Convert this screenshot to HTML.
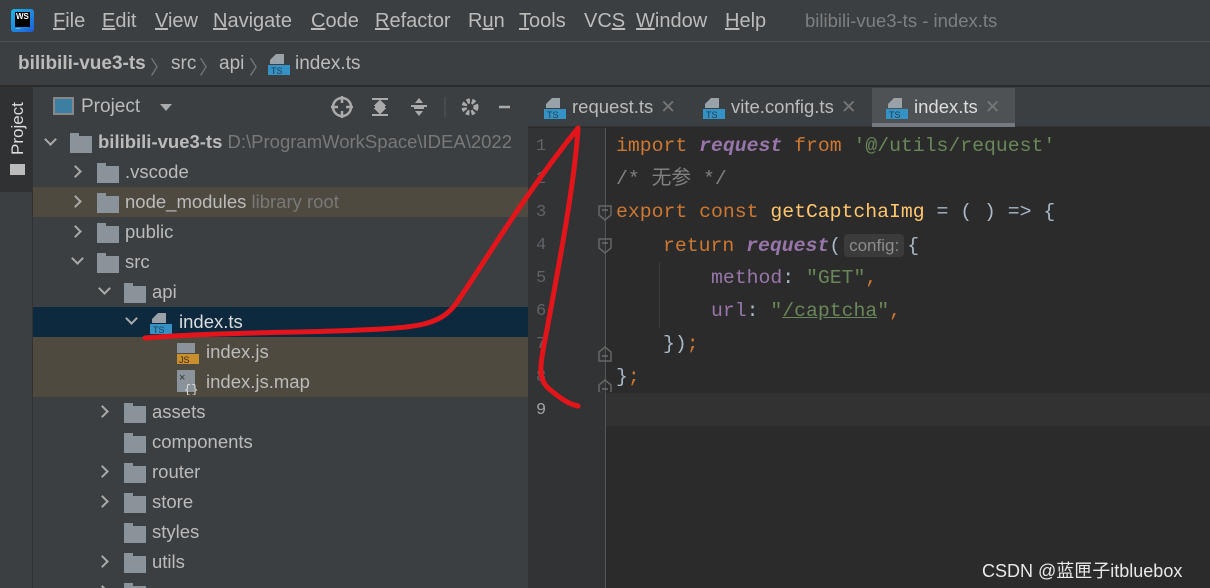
<!DOCTYPE html>
<html><head><meta charset="utf-8"><style>
*{margin:0;padding:0;box-sizing:border-box}
html,body{width:1210px;height:588px;overflow:hidden}
body{background:#3c3f41;font-family:"Liberation Sans","Noto Sans CJK SC",sans-serif;color:#bbbbbb;position:relative}
.a{position:absolute;white-space:nowrap}
.mono{font-family:"Liberation Mono","Noto Sans CJK SC",monospace;font-size:19.8px}
.row{position:absolute;left:33px;width:495px;height:30px;font-size:18.5px;line-height:30px;overflow:hidden}
.fold{position:absolute;width:22px;height:17px;background:#8a9399}
.fold:before{content:"";position:absolute;left:0;top:-3px;width:9px;height:4px;background:#8a9399}
.chev{position:absolute;width:9px;height:9px;border-right:2px solid #aaa;border-bottom:2px solid #aaa}
.ln{position:absolute;left:536px;width:14px;text-align:left;color:#606366;font-size:17px;font-family:"Liberation Mono",monospace}
.code{position:absolute;left:616px;height:33px;line-height:33px}
.k{color:#cc7832}.f{color:#9876aa;font-style:italic;font-weight:bold}.s{color:#6a8759}.c{color:#808080}.y{color:#ffc66d}.p{color:#9876aa}.w{color:#a9b7c6}
u.m{text-decoration:underline}
</style></head><body>
<div class="a" style="left:0;top:0;width:1210px;height:42px;background:#3c3f41;border-bottom:1px solid #515151"></div>
<div class="a" style="left:11px;top:9px;width:23px;height:23px;background:linear-gradient(135deg,#1fb6e6,#1e5fd8);border-radius:3px"></div>
<div class="a" style="left:15px;top:12px;width:15px;height:15px;background:#000;color:#fff;font-size:8px;font-weight:bold;line-height:9px;padding-left:1px">WS<br>_</div>
<div class="a" style="left:53px;top:10px;font-size:20px;color:#bbb">
<span class="a" style="left:0"><u>F</u>ile</span><span class="a" style="left:49px"><u>E</u>dit</span><span class="a" style="left:102px"><u>V</u>iew</span><span class="a" style="left:160px"><u>N</u>avigate</span><span class="a" style="left:258px"><u>C</u>ode</span><span class="a" style="left:322px"><u>R</u>efactor</span><span class="a" style="left:415px">R<u>u</u>n</span><span class="a" style="left:466px"><u>T</u>ools</span><span class="a" style="left:531px">VC<u>S</u></span><span class="a" style="left:583px"><u>W</u>indow</span><span class="a" style="left:672px"><u>H</u>elp</span></div>
<div class="a" style="left:805px;top:10px;font-size:18.5px;color:#7d7f81">bilibili-vue3-ts - index.ts</div>
<div class="a" style="left:0;top:85px;width:1210px;height:2px;background:#2b2b2b"></div>
<div class="a" style="left:18px;top:53px;font-size:19px;color:#bbb;font-weight:bold">bilibili-vue3-ts</div>
<div class="a" style="left:150px;top:53px;font-size:19px;color:#777">〉</div>
<div class="a" style="left:171px;top:53px;font-size:19px;color:#bbb">src</div>
<div class="a" style="left:199px;top:53px;font-size:19px;color:#777">〉</div>
<div class="a" style="left:219px;top:53px;font-size:19px;color:#bbb">api</div>
<div class="a" style="left:249px;top:53px;font-size:19px;color:#777">〉</div>
<div class="a" style="left:295px;top:53px;font-size:19px;color:#bbb">index.ts</div>
<svg class="a" style="left:267px;top:52px" width="24" height="24"><path d="M9 2h8v10H3V8z" fill="#9aa2a8"/><rect x="1" y="13" width="22" height="10" fill="#3592c4"/><text x="4" y="22" font-size="9" fill="#1b3d55" font-family="Liberation Sans">TS</text></svg>
<div class="a" style="left:0;top:87px;width:33px;height:501px;background:#3c3f41;border-right:1px solid #323232"></div>
<div class="a" style="left:0;top:87px;width:32px;height:105px;background:#2f3133"></div>
<div class="a" style="left:8px;top:100px;font-size:17px;color:#ddd;writing-mode:vertical-rl;transform:rotate(180deg);height:55px">Project</div>
<div class="a" style="left:10px;top:164px;width:15px;height:11px;background:#bbb"></div>
<div class="a" style="left:53px;top:97px;width:21px;height:18px;border:2px solid #888;background:#3d7fa3"></div>
<div class="a" style="left:81px;top:96px;font-size:19px;color:#bbb">Project</div>
<div class="a" style="left:160px;top:104px;border:6px solid transparent;border-top:7px solid #aaa"></div>
<svg class="a" style="left:330px;top:95px" width="180" height="24"><circle cx="12" cy="12" r="9" stroke="#aaa" stroke-width="2.5" fill="none"/><path d="M12 1v7M12 16v7M1 12h7M16 12h7" stroke="#aaa" stroke-width="2.5"/>
<path d="M42 4h16M42 20h16M45 12h10M50 6l-4 4h8zM50 18l-4-4h8z" stroke="#aaa" stroke-width="2" fill="#aaa"/>
<path d="M81 11h16M84 13h10" stroke="#aaa" stroke-width="2"/><path d="M89 3l-4 5h8zM89 21l-4-5h8z" fill="#aaa"/>
<line x1="115" y1="2" x2="115" y2="22" stroke="#555"/>
<circle cx="140" cy="12" r="6" stroke="#aaa" stroke-width="5" fill="none" stroke-dasharray="3 2"/><circle cx="140" cy="12" r="2.5" fill="#3c3f41"/>
<path d="M169 12h16" stroke="#aaa" stroke-width="2.5"/></svg>
<div class="row" style="top:127px"><div class="chev" style="left:13px;top:8px;transform:rotate(45deg)"></div><div class="fold" style="left:37px;top:9px"></div><span class="a" style="left:65px"><b>bilibili-vue3-ts</b> <span style="color:#787878">D:\ProgramWorkSpace\IDEA\2022</span></span></div>
<div class="row" style="top:157px"><div class="chev" style="left:38px;top:10px;transform:rotate(-45deg)"></div><div class="fold" style="left:64px;top:9px"></div><span class="a" style="left:92px">.vscode</span></div>
<div class="row" style="top:187px;background:#4e4a40"><div class="chev" style="left:38px;top:10px;transform:rotate(-45deg)"></div><div class="fold" style="left:64px;top:9px"></div><span class="a" style="left:92px">node_modules <span style="color:#787878">library root</span></span></div>
<div class="row" style="top:217px"><div class="chev" style="left:38px;top:10px;transform:rotate(-45deg)"></div><div class="fold" style="left:64px;top:9px"></div><span class="a" style="left:92px">public</span></div>
<div class="row" style="top:247px"><div class="chev" style="left:40px;top:7px;transform:rotate(45deg)"></div><div class="fold" style="left:64px;top:9px"></div><span class="a" style="left:92px">src</span></div>
<div class="row" style="top:277px"><div class="chev" style="left:67px;top:7px;transform:rotate(45deg)"></div><div class="fold" style="left:91px;top:9px"></div><span class="a" style="left:119px">api</span></div>
<div class="row" style="top:307px;background:#0d293e"><div class="chev" style="left:94px;top:7px;transform:rotate(45deg)"></div><svg class="a" style="left:116px;top:4px" width="24" height="24"><path d="M9 2h8v10H3V8z" fill="#9aa2a8"/><rect x="1" y="13" width="22" height="10" fill="#3592c4"/><text x="4" y="22" font-size="9" fill="#1b3d55" font-family="Liberation Sans">TS</text></svg><span class="a" style="left:146px;color:#ddd">index.ts</span></div>
<div class="row" style="top:337px;background:#4e4a40"><svg class="a" style="left:142px;top:5px" width="24" height="24"><rect x="2" y="1" width="18" height="10" fill="#8a9399"/><rect x="2" y="12" width="22" height="10" fill="#c98f2f"/><text x="4" y="21" font-size="9" fill="#3b2a0a" font-family="Liberation Sans">JS</text></svg><span class="a" style="left:173px">index.js</span></div>
<div class="row" style="top:367px;background:#4e4a40"><svg class="a" style="left:142px;top:2px" width="24" height="26"><rect x="2" y="1" width="18" height="22" fill="#8a9399"/><text x="4" y="12" font-size="11" fill="#333">×</text><text x="9" y="24" font-size="12" fill="#ddd" font-family="Liberation Mono">{}</text></svg><span class="a" style="left:173px">index.js.map</span></div>
<div class="row" style="top:397px"><div class="chev" style="left:65px;top:10px;transform:rotate(-45deg)"></div><div class="fold" style="left:91px;top:9px"></div><span class="a" style="left:119px">assets</span></div>
<div class="row" style="top:427px"><div class="fold" style="left:91px;top:9px"></div><span class="a" style="left:119px">components</span></div>
<div class="row" style="top:457px"><div class="chev" style="left:65px;top:10px;transform:rotate(-45deg)"></div><div class="fold" style="left:91px;top:9px"></div><span class="a" style="left:119px">router</span></div>
<div class="row" style="top:487px"><div class="chev" style="left:65px;top:10px;transform:rotate(-45deg)"></div><div class="fold" style="left:91px;top:9px"></div><span class="a" style="left:119px">store</span></div>
<div class="row" style="top:517px"><div class="fold" style="left:91px;top:9px"></div><span class="a" style="left:119px">styles</span></div>
<div class="row" style="top:547px"><div class="chev" style="left:65px;top:10px;transform:rotate(-45deg)"></div><div class="fold" style="left:91px;top:9px"></div><span class="a" style="left:119px">utils</span></div>
<div class="row" style="top:577px;height:11px"><div class="chev" style="left:65px;top:10px;transform:rotate(-45deg)"></div><div class="fold" style="left:91px;top:9px"></div></div>
<div class="a" style="left:528px;top:87px;width:682px;height:501px;background:#2b2b2b;border-left:1px solid #323232"></div>
<div class="a" style="left:528px;top:87px;width:682px;height:40px;background:#3c3f41;border-bottom:1px solid #323232"></div>
<div class="a" style="left:872px;top:88px;width:143px;height:39px;background:#4e5254;border-bottom:4px solid #747a80"></div>
<svg class="a" style="left:543px;top:96px" width="24" height="24"><path d="M9 2h8v10H3V8z" fill="#9aa2a8"/><rect x="1" y="13" width="22" height="10" fill="#3592c4"/><text x="4" y="22" font-size="9" fill="#1b3d55" font-family="Liberation Sans">TS</text></svg>
<svg class="a" style="left:702px;top:96px" width="24" height="24"><path d="M9 2h8v10H3V8z" fill="#9aa2a8"/><rect x="1" y="13" width="22" height="10" fill="#3592c4"/><text x="4" y="22" font-size="9" fill="#1b3d55" font-family="Liberation Sans">TS</text></svg>
<svg class="a" style="left:885px;top:96px" width="24" height="24"><path d="M9 2h8v10H3V8z" fill="#9aa2a8"/><rect x="1" y="13" width="22" height="10" fill="#3592c4"/><text x="4" y="22" font-size="9" fill="#1b3d55" font-family="Liberation Sans">TS</text></svg>
<div class="a" style="left:572px;top:96px;font-size:18.5px;color:#bbb">request.ts <span style="color:#777;margin-left:2px">✕</span></div>
<div class="a" style="left:731px;top:96px;font-size:18.5px;color:#bbb">vite.config.ts <span style="color:#777;margin-left:2px">✕</span></div>
<div class="a" style="left:914px;top:96px;font-size:18.5px;color:#ddd">index.ts <span style="color:#777;margin-left:2px">✕</span></div>
<div class="a" style="left:529px;top:128px;width:76px;height:460px;background:#313335"></div>
<div class="a" style="left:605px;top:128px;width:1px;height:460px;background:#555"></div>
<div class="a" style="left:606px;top:393px;width:604px;height:33px;background:#323232"></div>
<div class="a" style="left:659px;top:262px;width:1px;height:66px;background:#3b3b3b"></div>
<div class="ln" style="top:137px">1</div><div class="ln" style="top:170px">2</div><div class="ln" style="top:203px">3</div><div class="ln" style="top:236px">4</div><div class="ln" style="top:269px">5</div><div class="ln" style="top:302px">6</div><div class="ln" style="top:335px">7</div><div class="ln" style="top:368px">8</div><div class="ln" style="top:401px;color:#a4a3a3">9</div>
<svg class="a" style="left:597px;top:202px" width="16" height="190"><g fill="none" stroke="#666" stroke-width="1.5"><path d="M2 4h12v9l-6 5-6-5z"/><path d="M2 37h12v9l-6 5-6-5z"/><path d="M2 150l6-5 6 5v9H2z"/><path d="M2 183l6-5 6 5v9H2z"/></g><path d="M5 8h6M5 41h6M5 154h6M5 187h6" stroke="#777" stroke-width="1.2"/></svg>
<div class="code mono" style="top:130px"><span class="k">import</span> <span class="f">request</span> <span class="k">from</span> <span class="s">'@/utils/request'</span></div>
<div class="code mono" style="top:163px"><span class="c">/* 无参  */</span></div>
<div class="code mono" style="top:196px"><span class="k">export const</span> <span class="y">getCaptchaImg</span> <span class="w">= ( ) =&gt; {</span></div>
<div class="code mono" style="top:229px;left:663px"><span class="k">return</span> <span class="f">request</span><span class="w">(</span><span style="font-family:'Liberation Sans';font-size:17px;color:#8c8c8c;background:#3b3b3b;border-radius:4px;padding:2px 5px;margin:0 3px">config:</span><span class="w">{</span></div>
<div class="code mono" style="top:262px;left:711px"><span class="p">method</span><span class="w">:</span> <span class="s">"GET"</span><span class="k">,</span></div>
<div class="code mono" style="top:295px;left:711px"><span class="p">url</span><span class="w">:</span> <span class="s">"<u>/captcha</u>"</span><span class="k">,</span></div>
<div class="code mono" style="top:328px;left:663px"><span class="w">})</span><span class="k">;</span></div>
<div class="code mono" style="top:361px"><span class="w">}</span><span class="k">;</span></div>
<div class="a" style="left:982px;top:557px;font-size:18px;color:#e8e8e8">CSDN @蓝匣子itbluebox</div>
<svg class="a" style="left:0;top:0" width="1210" height="588"><path d="M145 338C220 332 300 333 360 330C420 328 440 324 455 305C480 270 520 200 578 128C575 180 560 260 545 340C540 365 538 378 548 388C560 398 568 404 578 406" fill="none" stroke="#e3151b" stroke-width="5" stroke-linecap="round" stroke-linejoin="round"/></svg>
</body></html>
